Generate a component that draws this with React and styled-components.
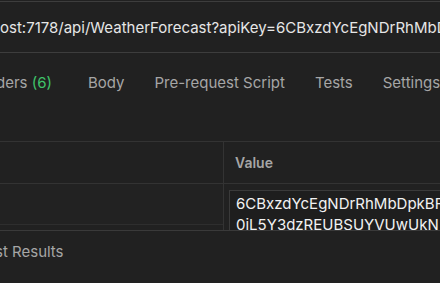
import styled, { createGlobalStyle } from 'styled-components';

const Global = createGlobalStyle`
  *, *::before, *::after {
    box-sizing: border-box;
  }
  html, body {
    margin: 0;
    background: #212121;
  }
  body {
    font-family: Inter, "Noto Sans", sans-serif;
    overflow: hidden;
  }
`;

const Page = styled.div`
  width: 440px;
  height: 283px;
  overflow: hidden;
  background: #212121;
`;

const UrlBar = styled.div`
  margin-top: 1px;
  height: 52px;
  border-top: 1px solid #3d3d3d;
  border-bottom: 1px solid #3d3d3d;
  display: flex;
  align-items: center;
  white-space: nowrap;
  font-size: 15px;
  color: #e6e6e6;
  overflow: hidden;
`;

const Tabs = styled.div`
  display: flex;
  align-items: center;
  gap: 30px;
  height: 44px;
  margin: 7px 0 0 -4px;
  white-space: nowrap;
  font-size: 15px;
  color: #a6a6a6;
`;

const Tab = styled.span`
  margin-left: ${(p) => p.$offset || 0}px;
`;

const Count = styled.span`
  color: #3fc46a;
`;

const Table = styled.div`
  margin-top: 37px;
  border-top: 1px solid #333333;
  display: grid;
  grid-template-columns: 223px 1fr;
`;

const HeadCell = styled.div`
  height: 42px;
  border-bottom: 1px solid #333333;
  border-left: ${(p) => (p.$first ? 'none' : '1px solid #333333')};
  display: flex;
  align-items: center;
  padding-left: 11px;
  font-size: 14px;
  font-weight: 600;
  color: #a6a6a6;
`;

const KeyCell = styled.div`
  align-self: start;
  height: 41px;
  border-bottom: 1px solid #2e2e2e;
  background: #222222;
`;

const ValueCell = styled.div`
  height: 46px;
  border-left: 1px solid #333333;
  padding: 6px 0 0 5px;
  overflow: hidden;
`;

const ValueBox = styled.div`
  border: 1px solid #3a3a3a;
  border-right: none;
  background: #1e1e1e;
  padding: 2px 0 0 6px;
  height: 60px;
  font-size: 15px;
  line-height: 21px;
  color: #f2f2f2;
  white-space: nowrap;
`;

const Results = styled.div`
  border-top: 1px solid #3a3a3a;
  height: 42px;
  display: flex;
  align-items: center;
  padding-left: 0;
  text-indent: -5px;
  font-size: 15px;
  color: #a6a6a6;
  white-space: nowrap;
`;

export default function App() {
  return (
    <Page>
      <Global />
      <UrlBar>ost:7178/api/WeatherForecast?apiKey=6CBxzdYcEgNDrRhMbDpkBF0iL5Y3dzREUBSUYVUwUkN</UrlBar>
      <Tabs>
        <Tab>
          ders <Count>(6)</Count>
        </Tab>
        <Tab $offset={6}>Body</Tab>
        <Tab>Pre-request Script</Tab>
        <Tab>Tests</Tab>
        <Tab>Settings</Tab>
      </Tabs>
      <Table>
        <HeadCell $first />
        <HeadCell>Value</HeadCell>
        <KeyCell />
        <ValueCell>
          <ValueBox>
            6CBxzdYcEgNDrRhMbDpkBF
            <br />
            0iL5Y3dzREUBSUYVUwUkN
          </ValueBox>
        </ValueCell>
      </Table>
      <Results>
        <span>st Results</span>
      </Results>
    </Page>
  );
}
